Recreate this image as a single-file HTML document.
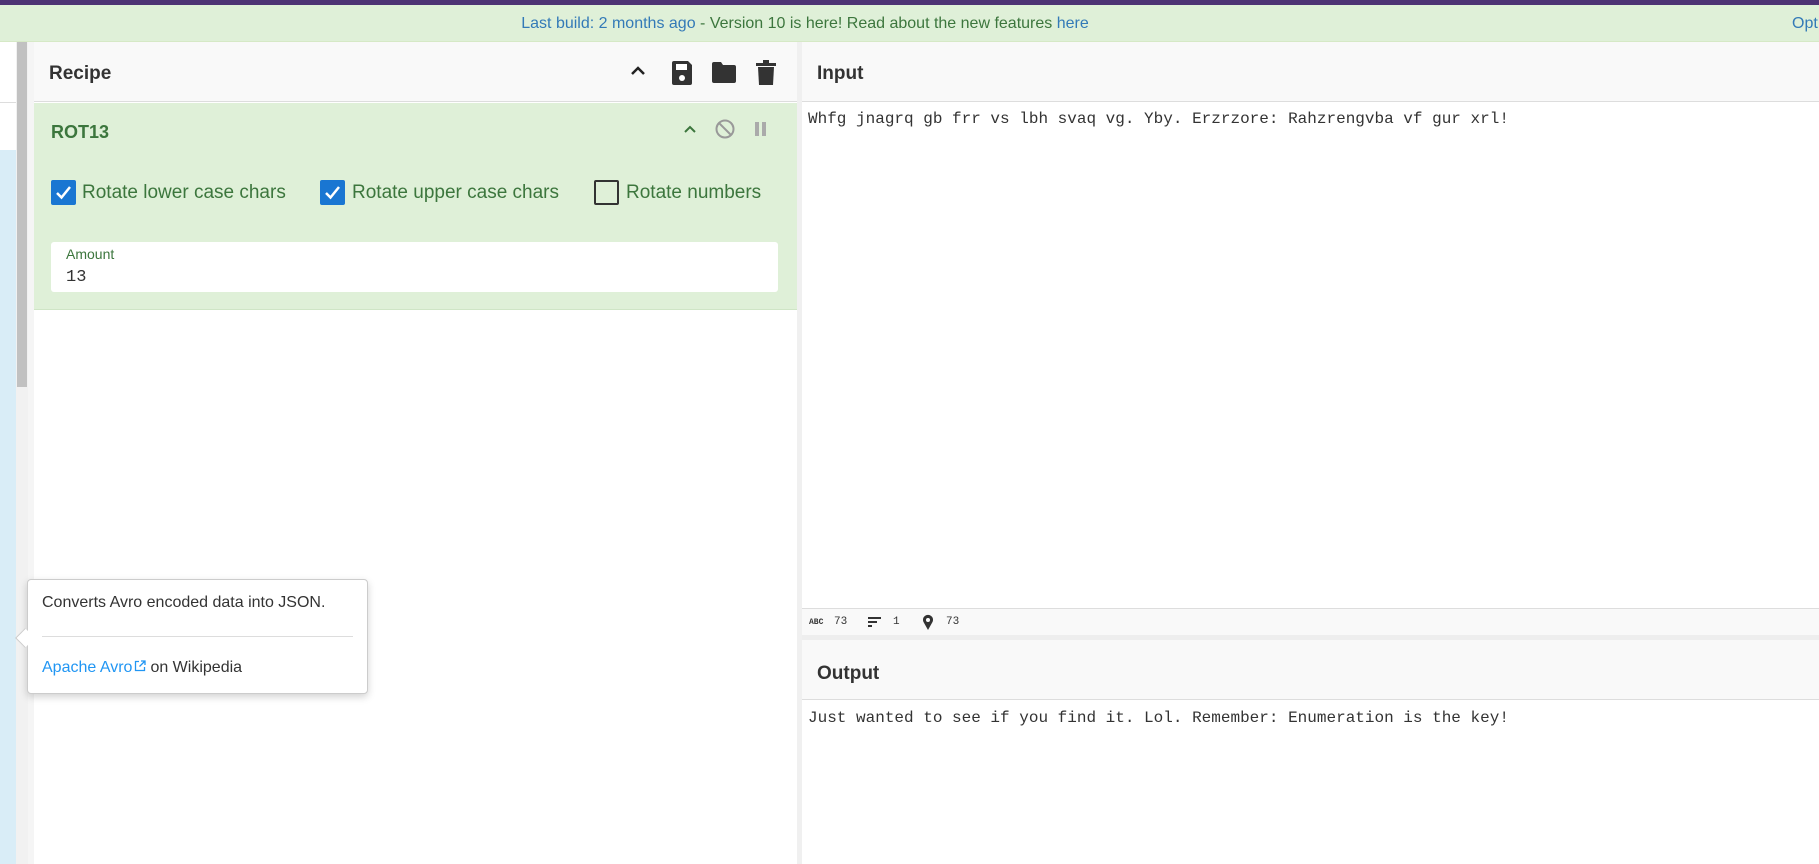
<!DOCTYPE html>
<html><head><meta charset="utf-8"><style>
*{box-sizing:border-box;margin:0;padding:0}
body{width:1819px;height:864px;overflow:hidden;position:relative;background:#fff;font-family:"Liberation Sans",sans-serif}
.abs{position:absolute}
.mono{font-family:"Liberation Mono",monospace;font-size:16px;color:#333}
.hdr{font-weight:bold;font-size:19px;color:#333}
.sb{font-family:"Liberation Mono",monospace;font-size:11px;color:#333;top:616px}
</style></head><body>
<div class="abs" style="left:0;top:0;width:1819px;height:5px;background:#4d3374"></div>
<div class="abs" style="left:0;top:5px;width:1819px;height:37px;background:#dff0d8;border-bottom:1px solid #d6e9c6"></div>
<div class="abs" style="left:0;top:15px;width:1610px;text-align:center;font-size:16px;color:#3c763d;white-space:nowrap"><span style="color:#337ab7">Last build: 2 months ago</span> - Version 10 is here! Read about the new features <span style="color:#337ab7">here</span></div>
<div class="abs" style="left:1792px;top:15px;font-size:16px;color:#337ab7">Opt</div>

<!-- left strip -->
<div class="abs" style="left:0;top:42px;width:16px;height:822px;background:#fff"></div>
<div class="abs" style="left:0;top:150px;width:16px;height:714px;background:#d9edf7"></div>
<div class="abs" style="left:0;top:102px;width:16px;height:1px;background:#ddd"></div>
<div class="abs" style="left:16px;top:42px;width:12px;height:822px;background:#f1f1f1"></div>
<div class="abs" style="left:17px;top:42px;width:10px;height:345px;background:#c1c1c1"></div>
<div class="abs" style="left:28px;top:42px;width:6px;height:822px;background:#f5f5f5"></div>

<!-- recipe -->
<div class="abs" style="left:34px;top:42px;width:763px;height:60px;background:#f9f9f9;border-bottom:1px solid #ddd"></div>
<div class="abs hdr" style="left:49px;top:63px">Recipe</div>
<svg class="abs" style="left:628px;top:60px" width="20" height="20" viewBox="0 0 20 20"><path d="M4 14 L10 8 L16 14" stroke="#222" stroke-width="2.5" fill="none"/></svg>
<svg class="abs" style="left:670px;top:60px" width="24" height="26" viewBox="0 0 24 26"><path d="M2 3 Q2 1 4 1 L18 1 L22 5 L22 23 Q22 25 20 25 L4 25 Q2 25 2 23Z" fill="#333"/><rect x="6" y="4" width="11" height="6" fill="#fff"/><circle cx="12" cy="18" r="3" fill="#fff"/></svg>
<svg class="abs" style="left:711px;top:61px" width="26" height="22" viewBox="0 0 26 22"><path d="M1 3 Q1 1 3 1 L10 1 L12 4 L23 4 Q25 4 25 6 L25 20 Q25 22 23 22 L3 22 Q1 22 1 20Z" fill="#333"/></svg>
<svg class="abs" style="left:755px;top:60px" width="22" height="26" viewBox="0 0 22 26"><rect x="1" y="3" width="20" height="3" fill="#333"/><rect x="8" y="0" width="6" height="3" fill="#333"/><path d="M3 7 L19 7 L18 25 L4 25Z" fill="#333"/></svg>

<div class="abs" style="left:34px;top:103px;width:763px;height:207px;background:#dff0d8;border-bottom:1px solid #cfe5c6"></div>
<div class="abs" style="left:51px;top:122px;font-weight:bold;font-size:18px;color:#3c763d">ROT13</div>
<svg class="abs" style="left:682px;top:121px" width="16" height="16" viewBox="0 0 16 16"><path d="M3 11 L8 6 L13 11" stroke="#3c763d" stroke-width="2" fill="none"/></svg>
<svg class="abs" style="left:714px;top:118px" width="22" height="22" viewBox="0 0 22 22"><circle cx="11" cy="11" r="8.5" stroke="#999" stroke-width="2" fill="none"/><path d="M5 5 L17 17" stroke="#999" stroke-width="2"/></svg>
<div class="abs" style="left:755px;top:122px;width:4px;height:14px;background:#aaa"></div>
<div class="abs" style="left:762px;top:122px;width:4px;height:14px;background:#aaa"></div>

<div class="abs" style="left:51px;top:180px;width:25px;height:25px;background:#1976d2;border-radius:2px"></div>
<svg class="abs" style="left:51px;top:180px" width="25" height="25"><path d="M6 13 L10.5 17.5 L19 7" stroke="#fff" stroke-width="2.5" fill="none"/></svg>
<div class="abs" style="left:82px;top:182px;font-size:19px;color:#3c763d">Rotate lower case chars</div>
<div class="abs" style="left:320px;top:180px;width:25px;height:25px;background:#1976d2;border-radius:2px"></div>
<svg class="abs" style="left:320px;top:180px" width="25" height="25"><path d="M6 13 L10.5 17.5 L19 7" stroke="#fff" stroke-width="2.5" fill="none"/></svg>
<div class="abs" style="left:352px;top:182px;font-size:19px;color:#3c763d">Rotate upper case chars</div>
<div class="abs" style="left:594px;top:180px;width:25px;height:25px;border:2px solid #333;border-radius:2px"></div>
<div class="abs" style="left:626px;top:182px;font-size:19px;color:#3c763d">Rotate numbers</div>

<div class="abs" style="left:51px;top:242px;width:727px;height:50px;background:#fff;border-radius:3px"></div>
<div class="abs" style="left:66px;top:246px;font-size:14px;color:#3c763d">Amount</div>
<div class="abs mono" style="left:66px;top:268px;font-size:17px">13</div>

<!-- divider -->
<div class="abs" style="left:797px;top:42px;width:5px;height:822px;background:#f0f0f0"></div>

<!-- input -->
<div class="abs" style="left:802px;top:42px;width:1017px;height:60px;background:#f9f9f9;border-bottom:1px solid #ddd"></div>
<div class="abs hdr" style="left:817px;top:63px">Input</div>
<div class="abs mono" style="left:808px;top:110px;white-space:pre">Whfg jnagrq gb frr vs lbh svaq vg. Yby. Erzrzore: Rahzrengvba vf gur xrl!</div>
<div class="abs" style="left:802px;top:608px;width:1017px;height:27px;background:#f9f9f9;border-top:1px solid #ddd"></div>
<div class="abs sb" style="left:809px;font-size:8px;font-weight:bold;top:618px">ABC</div>
<div class="abs sb" style="left:834px">73</div>
<svg class="abs" style="left:868px;top:616px" width="14" height="12" viewBox="0 0 14 12"><rect x="0" y="1" width="13" height="2" fill="#333"/><rect x="0" y="5" width="9" height="2" fill="#333"/><rect x="0" y="9" width="4" height="2" fill="#333"/></svg>
<div class="abs sb" style="left:893px">1</div>
<svg class="abs" style="left:922px;top:614px" width="12" height="17" viewBox="0 0 12 17"><path d="M6 16 L1.5 8 A5 5 0 1 1 10.5 8Z" fill="#333"/><circle cx="6" cy="6" r="2" fill="#fff"/></svg>
<div class="abs sb" style="left:946px">73</div>
<div class="abs" style="left:802px;top:635px;width:1017px;height:5px;background:#eee"></div>
<div class="abs" style="left:802px;top:640px;width:1017px;height:60px;background:#f9f9f9;border-bottom:1px solid #ddd"></div>
<div class="abs hdr" style="left:817px;top:663px">Output</div>
<div class="abs mono" style="left:808px;top:709px;white-space:pre">Just wanted to see if you find it. Lol. Remember: Enumeration is the key!</div>

<!-- tooltip -->
<div class="abs" style="left:27px;top:579px;width:341px;height:115px;background:#fff;border:1px solid #ccc;border-radius:4px;box-shadow:0 3px 8px rgba(0,0,0,.18)"></div>
<div class="abs" style="left:18px;top:631px;width:14px;height:14px;background:#fff;border-left:1px solid #ccc;border-bottom:1px solid #ccc;transform:rotate(45deg)"></div>
<div class="abs" style="left:42px;top:594px;font-size:16px;color:#333">Converts Avro encoded data into JSON.</div>
<div class="abs" style="left:42px;top:636px;width:311px;height:1px;background:#ddd"></div>
<div class="abs" style="left:42px;top:659px;font-size:16px;color:#333"><span style="color:#2196f3">Apache Avro</span><svg width="12" height="12" viewBox="0 0 12 12" style="vertical-align:0;margin:0 4px 0 2px"><path d="M5 1.5 H1.5 V10.5 H10.5 V7 M7 1 H11 V5 M11 1 L5.5 6.5" stroke="#2196f3" stroke-width="1.3" fill="none"/></svg>on Wikipedia</div>
</body></html>
